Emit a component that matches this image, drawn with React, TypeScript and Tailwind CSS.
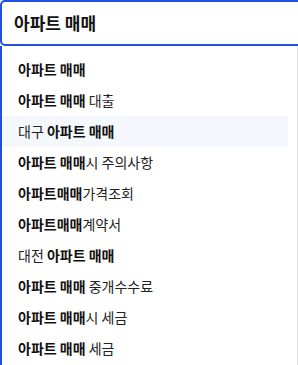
const items: { parts: [string, boolean][] }[] = [
  { parts: [["아파트 매매", true]] },
  { parts: [["아파트 매매", true], [" 대출", false]] },
  { parts: [["대구 ", false], ["아파트 매매", true]] },
  { parts: [["아파트 매매", true], ["시 주의사항", false]] },
  { parts: [["아파트매매", true], ["가격조회", false]] },
  { parts: [["아파트매매", true], ["계약서", false]] },
  { parts: [["대전 ", false], ["아파트 매매", true]] },
  { parts: [["아파트 매매", true], [" 중개수수료", false]] },
  { parts: [["아파트 매매", true], ["시 세금", false]] },
  { parts: [["아파트 매매", true], [" 세금", false]] },
];

export default function App() {
  return (
    <div
      className="w-[298px] h-[365px] overflow-hidden bg-white text-[#111]"
      style={{ fontFamily: '"Noto Sans CJK KR", "Noto Sans", sans-serif' }}
    >
      {/* search input */}
      <div className="w-[320px] h-[46px] border-2 border-[#1f4fe3] rounded-l-[5px] flex items-center pl-3 bg-white">
        <span className="text-[17px] font-semibold whitespace-pre">아파트 매매</span>
      </div>

      {/* suggestions */}
      <div className="border-l-2 border-l-[#1f4fe3] border-r border-r-[#dcdcdc] h-[400px] pt-2 pr-[9px]">
        {items.map((item, i) => (
          <div
            key={i}
            className={`h-[31px] flex items-center pl-4 text-[14px] whitespace-pre ${
              i === 2 ? "bg-[#f4f8fc]" : ""
            }`}
          >
            {item.parts.map(([t, b], j) => (
              <span key={j} className={b ? "font-bold" : "font-normal text-[#222]"}>
                {t}
              </span>
            ))}
          </div>
        ))}
      </div>
    </div>
  );
}
